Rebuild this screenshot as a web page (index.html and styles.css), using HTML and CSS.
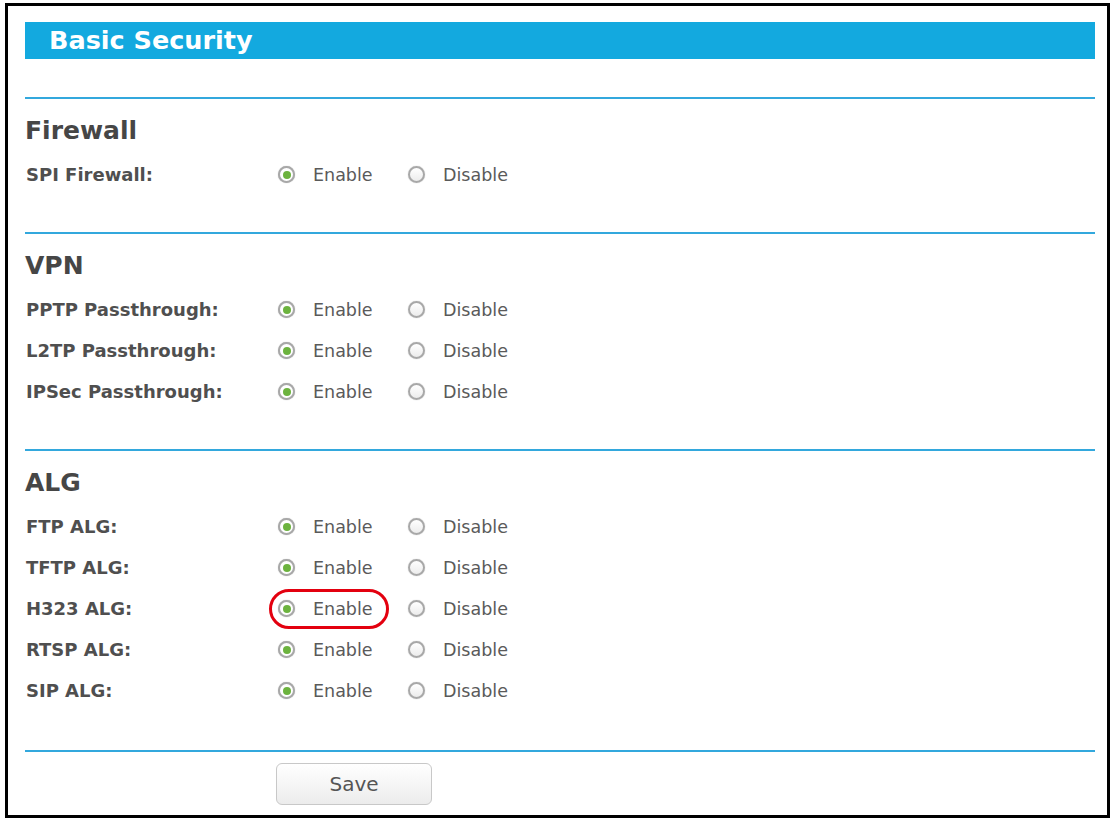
FILE: index.html
```html
<!DOCTYPE html>
<html lang="en">
<head>
  <meta charset="UTF-8">
  <title>Basic Security</title>
  <link rel="stylesheet" href="styles.css">
</head>
<body>
  <div class="frame">
    <div class="title-bar">Basic Security</div>

    <div class="section">
      <h2 class="section-title">Firewall</h2>
      <div class="row">
        <span class="label">SPI Firewall:</span>
        <label class="option"><span class="radio on"></span>Enable</label>
        <label class="option"><span class="radio"></span>Disable</label>
      </div>
    </div>

    <div class="section">
      <h2 class="section-title">VPN</h2>
      <div class="row">
        <span class="label">PPTP Passthrough:</span>
        <label class="option"><span class="radio on"></span>Enable</label>
        <label class="option"><span class="radio"></span>Disable</label>
      </div>
      <div class="row">
        <span class="label">L2TP Passthrough:</span>
        <label class="option"><span class="radio on"></span>Enable</label>
        <label class="option"><span class="radio"></span>Disable</label>
      </div>
      <div class="row">
        <span class="label">IPSec Passthrough:</span>
        <label class="option"><span class="radio on"></span>Enable</label>
        <label class="option"><span class="radio"></span>Disable</label>
      </div>
    </div>

    <div class="section section-last">
      <h2 class="section-title">ALG</h2>
      <div class="row">
        <span class="label">FTP ALG:</span>
        <label class="option"><span class="radio on"></span>Enable</label>
        <label class="option"><span class="radio"></span>Disable</label>
      </div>
      <div class="row">
        <span class="label">TFTP ALG:</span>
        <label class="option"><span class="radio on"></span>Enable</label>
        <label class="option"><span class="radio"></span>Disable</label>
      </div>
      <div class="row">
        <span class="label">H323 ALG:</span>
        <label class="option marked"><span class="radio on"></span>Enable</label>
        <label class="option"><span class="radio"></span>Disable</label>
      </div>
      <div class="row">
        <span class="label">RTSP ALG:</span>
        <label class="option"><span class="radio on"></span>Enable</label>
        <label class="option"><span class="radio"></span>Disable</label>
      </div>
      <div class="row">
        <span class="label">SIP ALG:</span>
        <label class="option"><span class="radio on"></span>Enable</label>
        <label class="option"><span class="radio"></span>Disable</label>
      </div>
    </div>

    <div class="actions">
      <button class="btn-save">Save</button>
    </div>
  </div>
</body>
</html>
```

FILE: styles.css
```css
html, body {
  margin: 0;
  padding: 0;
  background-color: #fff;
}

body {
  font-family: "DejaVu Sans", Verdana, sans-serif;
  color: #555;
}

.frame {
  box-sizing: border-box;
  width: 1105px;
  height: 815px;
  margin: 3px 0 2px 5px;
  border: 3px solid #000;
  padding: 16px 12px 0 17px;
}

.title-bar {
  height: 37px;
  line-height: 37px;
  padding-left: 24px;
  background-color: #13a9df;
  color: #fff;
  font-size: 25.5px;
  font-weight: bold;
  margin-bottom: 38px;
}

.section {
  border-top: 2px solid #33a8dd;
  padding: 18px 0 37px;
}

.section-last {
  padding-bottom: 39px;
}

.section-title {
  margin: 0 0 9px;
  font-size: 25px;
  line-height: 28px;
  font-weight: bold;
  color: #464646;
}

.row {
  display: flex;
  align-items: center;
  height: 41px;
}

.label {
  width: 252px;
  padding-left: 1px;
  font-size: 18px;
  font-weight: bold;
  color: #4f4f4f;
}

.option {
  position: relative;
  display: flex;
  align-items: center;
  width: 130px;
  font-size: 17.5px;
  color: #5a5a5a;
}

.radio {
  position: relative;
  box-sizing: border-box;
  width: 17px;
  height: 17px;
  margin-right: 18px;
  border: 2px solid #a8a8a8;
  border-radius: 50%;
  background: linear-gradient(#fff, #ececec);
  box-shadow: 0 0 1px rgba(0, 0, 0, 0.3);
}

.radio.on {
  background: #fff;
}

.radio.on::after {
  content: "";
  position: absolute;
  top: 2.5px;
  left: 2.5px;
  width: 8px;
  height: 8px;
  border-radius: 50%;
  background-color: #6cb33e;
}

/* red ring drawn round the H323 enable choice */
.option.marked::before {
  content: "";
  position: absolute;
  left: -9px;
  top: calc(50% - 20px);
  width: 114px;
  height: 34px;
  border: 3px solid #e3000f;
  border-radius: 20px;
}

.actions {
  border-top: 2px solid #33a8dd;
  padding: 11px 0 0 251px;
}

.btn-save {
  width: 156px;
  height: 42px;
  border: 1px solid #c8c8c8;
  border-radius: 6px;
  background: linear-gradient(#fff, #ececec);
  font-family: "DejaVu Sans", Verdana, sans-serif;
  font-size: 20px;
  color: #555;
}
```
